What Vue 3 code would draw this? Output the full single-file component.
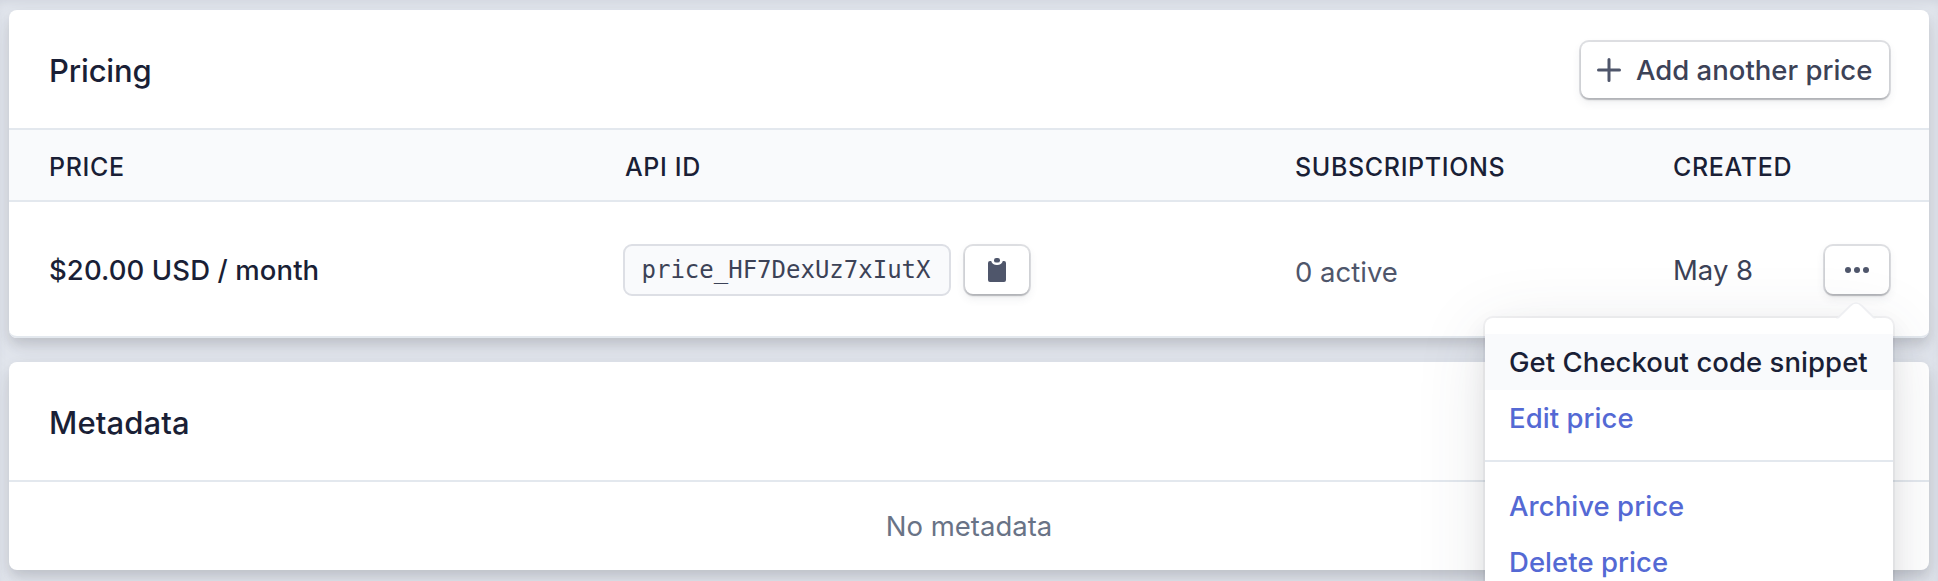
<script setup>
const columns = ['Price', 'API ID', 'Subscriptions', 'Created']
const menuGroups = [
  [
    { label: 'Get Checkout code snippet', active: true },
    { label: 'Edit price', active: false },
  ],
  [
    { label: 'Archive price', active: false },
    { label: 'Delete price', active: false },
  ],
]
</script>

<template>
  <main class="page">
    <section class="card">
      <header class="card-header">
        <h2 class="title title-pricing">Pricing</h2>
        <button class="button add-button">
          <svg class="plus" viewBox="0 0 24 24" width="24" height="24">
            <path d="M12 1.500v21M1.500 12h21" fill="none" stroke="currentColor" stroke-width="3" stroke-linecap="round" />
          </svg>
          <span class="add-label">Add another price</span>
        </button>
      </header>
      <div class="grid head-row">
        <span v-for="c in columns" :key="c" class="th">{{ c }}</span>
      </div>
      <div class="grid body-row">
        <span class="amount">$20.00 USD / month</span>
        <div class="api">
          <code class="api-id">price_HF7DexUz7xIutX</code>
          <button class="button icon-button" aria-label="Copy">
            <svg viewBox="0 0 18 24" width="18" height="24">
              <path d="M2 3H3.2C3.8 5.5 6 7 9 7S14.200 5.500 14.800 3H16a2 2 0 0 1 2 2V22a2 2 0 0 1-2 2H2a2 2 0 0 1-2-2V5a2 2 0 0 1 2-2Z" fill="currentColor" />
              <rect x="6" y="0" width="6" height="4.600" rx="2.200" fill="currentColor" />
            </svg>
          </button>
        </div>
        <span class="subs">0 active</span>
        <span class="date">May 8</span>
        <div class="actions">
          <button class="button icon-button" aria-label="More">
            <svg viewBox="0 0 24 6" width="24" height="6">
              <circle cx="3" cy="3" r="3" fill="currentColor" />
              <circle cx="12" cy="3" r="3" fill="currentColor" />
              <circle cx="21" cy="3" r="3" fill="currentColor" />
            </svg>
          </button>
          <div class="menu">
            <svg class="caret" viewBox="0 0 40 18" width="40" height="18">
              <path class="caret-edge" d="M0 16.500L14 2.800Q20 -2.500 26 2.800L40 16.500Z" />
              <path d="M1 18L15 4.200Q20 -0.500 25 4.200L39 18Z" fill="#fff" />
            </svg>
            <div v-for="(group, i) in menuGroups" :key="i" class="menu-group">
              <a v-for="item in group" :key="item.label" :class="['menu-item', { active: item.active }]">{{ item.label }}</a>
            </div>
          </div>
        </div>
      </div>
    </section>

    <section class="card">
      <header class="card-header">
        <h2 class="title title-metadata">Metadata</h2>
      </header>
      <div class="empty"><span>No metadata</span></div>
    </section>
  </main>
</template>

<style>
html,
body {
  overflow: hidden;
  background: #e3e8ee;
}
</style>

<style scoped>
.page {
  box-sizing: border-box;
  height: 581px;
  padding: 10px 9px 0;
  display: flex;
  flex-direction: column;
  gap: 24px;
  overflow: hidden;
  background: #e3e7ee;
  box-shadow: inset 0 6px 12px -4px rgba(60, 66, 87, 0.12);
  font-family: Inter, "Liberation Sans", sans-serif;
  color: #1a1f36;
}
.card {
  flex: none;
  border-radius: 8px;
  background: #fff;
  box-shadow: 0 14px 28px 0 rgba(60, 66, 87, 0.08), 0 6px 12px 0 rgba(0, 0, 0, 0.12);
}
.card-header {
  box-sizing: border-box;
  height: 120px;
  padding: 2px 38px 0 40px;
  display: flex;
  align-items: center;
  justify-content: space-between;
  border-bottom: 2px solid #e3e8ee;
}
.title {
  margin: 0;
  padding-top: 2px;
  font-size: 31px;
  line-height: 40px;
  font-weight: 500;
}
.title-pricing {
  letter-spacing: -0.15px;
}
.title-metadata {
  letter-spacing: 0.1px;
}
.button {
  box-sizing: border-box;
  margin: 0;
  padding: 0;
  display: flex;
  align-items: center;
  border: 0;
  border-radius: 8px;
  background: #fff;
  color: #4f566b;
  font-family: inherit;
  box-shadow: 0 0 0 2px rgba(60, 66, 87, 0.16), 0 2px 2px 0 rgba(0, 0, 0, 0.17), 0 4px 10px 0 rgba(60, 66, 87, 0.1);
}
.add-button {
  width: 308px;
  height: 56px;
  margin-right: 2px;
  padding-left: 16px;
  gap: 15px;
}
.add-label {
  color: #3c4257;
  font-size: 27.5px;
  font-weight: 500;
  white-space: nowrap;
}
.grid {
  display: grid;
  grid-template-columns: 576px 670px 378px 149px 1fr;
  align-items: center;
  padding: 0 40px;
}
.head-row {
  height: 70px;
  border-bottom: 2px solid #e3e8ee;
  background: #f9fafc;
}
.th {
  font-size: 25px;
  line-height: 32px;
  font-weight: 500;
  letter-spacing: 0.65px;
  text-transform: uppercase;
  white-space: nowrap;
  padding-top: 3px;
}
.body-row {
  box-sizing: border-box;
  height: 136px;
  padding-top: 2px;
  border-bottom: 2px solid #e3e8ee;
  border-radius: 0 0 8px 8px;
  white-space: nowrap;
  font-size: 27.5px;
  line-height: 40px;
}
.amount {
  font-weight: 500;
  letter-spacing: 0.1px;
}
.api {
  display: flex;
  align-items: center;
  gap: 14px;
}
.api-id {
  box-sizing: border-box;
  width: 328px;
  height: 52px;
  margin-left: -2px;
  padding-right: 2px;
  border: 2px solid #dddfe5;
  border-radius: 9px;
  background: #f9fafc;
  color: #3c4257;
  font: 24px/48px "DejaVu Sans Mono", monospace;
  text-align: center;
}
.icon-button {
  width: 64px;
  height: 48px;
  justify-content: center;
}
.subs {
  color: #4f566b;
  padding-top: 4px;
}
.date {
  color: #3c4257;
}
.actions {
  position: relative;
  z-index: 2;
  padding-left: 3px;
}
.menu {
  position: absolute;
  top: 72px;
  right: -4px;
  box-sizing: border-box;
  width: 408px;
  height: 320px;
  border-radius: 8px;
  background: #fff;
  box-shadow: 0 0 0 2px rgba(60, 66, 87, 0.05), 0 10px 24px 0 rgba(0, 0, 0, 0.08), 0 14px 70px 0 rgba(60, 66, 87, 0.13);
}
.caret {
  position: absolute;
  top: -16px;
  right: 17px;
}
.caret-edge {
  fill: #eeeff2;
}
.menu-group {
  padding: 16px 0 14px;
}
.menu-group + .menu-group {
  border-top: 2px solid #e3e8ee;
}
.menu-item {
  height: 56px;
  padding-left: 24px;
  display: flex;
  align-items: center;
  color: #5469d4;
  font-weight: 500;
  letter-spacing: 0.05px;
}
.menu-item.active {
  background: #f9fafc;
  color: #1a1f36;
}
.empty {
  height: 88px;
  display: flex;
  align-items: center;
  justify-content: center;
  font-size: 27.5px;
  color: #697386;
}
</style>
